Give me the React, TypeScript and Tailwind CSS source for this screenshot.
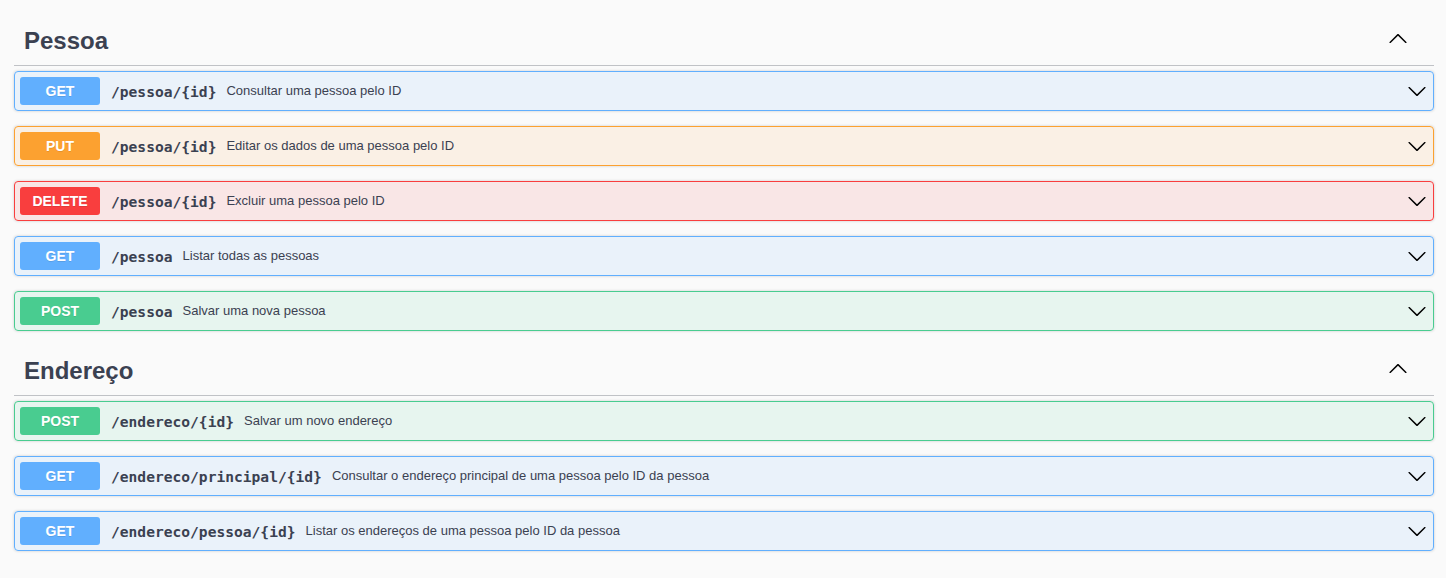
import React from "react";

type Method = "GET" | "PUT" | "DELETE" | "POST";

type Operation = {
  method: Method;
  path: string;
  summary: string;
};

const styles: Record<Method, { block: string; badge: string }> = {
  GET: {
    block: "border-[#61affe] bg-[rgba(97,175,254,0.1)]",
    badge: "bg-[#61affe]",
  },
  PUT: {
    block: "border-[#fca130] bg-[rgba(252,161,48,0.1)]",
    badge: "bg-[#fca130]",
  },
  DELETE: {
    block: "border-[#f93e3e] bg-[rgba(249,62,62,0.1)]",
    badge: "bg-[#f93e3e]",
  },
  POST: {
    block: "border-[#49cc90] bg-[rgba(73,204,144,0.1)]",
    badge: "bg-[#49cc90]",
  },
};

const sections: { name: string; ops: Operation[] }[] = [
  {
    name: "Pessoa",
    ops: [
      { method: "GET", path: "/pessoa/{id}", summary: "Consultar uma pessoa pelo ID" },
      { method: "PUT", path: "/pessoa/{id}", summary: "Editar os dados de uma pessoa pelo ID" },
      { method: "DELETE", path: "/pessoa/{id}", summary: "Excluir uma pessoa pelo ID" },
      { method: "GET", path: "/pessoa", summary: "Listar todas as pessoas" },
      { method: "POST", path: "/pessoa", summary: "Salvar uma nova pessoa" },
    ],
  },
  {
    name: "Endereço",
    ops: [
      { method: "POST", path: "/endereco/{id}", summary: "Salvar um novo endereço" },
      {
        method: "GET",
        path: "/endereco/principal/{id}",
        summary: "Consultar o endereço principal de uma pessoa pelo ID da pessoa",
      },
      {
        method: "GET",
        path: "/endereco/pessoa/{id}",
        summary: "Listar os endereços de uma pessoa pelo ID da pessoa",
      },
    ],
  },
];

function ArrowDown() {
  return (
    <svg width="20" height="20" viewBox="0 0 20 20" className="mr-[1px] shrink-0" aria-hidden="true">
      <path
        fill="#000"
        d="M17.418 6.109c.272-.268.709-.268.979 0s.271.701 0 .969l-7.908 7.83c-.27.268-.707.268-.979 0l-7.908-7.83c-.27-.268-.27-.701 0-.969.271-.268.709-.268.979 0L10 13.25l7.418-7.141z"
      />
    </svg>
  );
}

function ArrowUp() {
  return (
    <svg width="20" height="20" viewBox="0 0 20 20" className="mr-[6px] mb-[5px] shrink-0" aria-hidden="true">
      <path
        fill="#000"
        d="M17.418 14.908c.272.268.709.268.979 0s.271-.701 0-.969l-7.908-7.83c-.27-.268-.707-.268-.979 0l-7.908 7.83c-.27.268-.27.701 0 .969.271.268.709.268.979 0L10 7.767l7.418 7.141z"
      />
    </svg>
  );
}

function OperationRow({ op }: { op: Operation }) {
  const s = styles[op.method];
  return (
    <div
      className={`mb-[15px] flex items-center rounded-[4px] border p-[5px] shadow-[0_0_3px_rgba(0,0,0,0.19)] ${s.block}`}
    >
      <span
        className={`flex h-[28px] w-[80px] shrink-0 items-center justify-center rounded-[3px] text-[14px] font-bold text-white [text-shadow:0_1px_0_rgba(0,0,0,0.1)] ${s.badge}`}
        style={{ fontFamily: '"Liberation Sans", Arial, sans-serif' }}
      >
        {op.method}
      </span>
      <span
        className="pl-[11px] pr-[10px] pt-[2px] text-[14.6px] font-bold text-[#3b4151]"
        style={{ fontFamily: '"DejaVu Sans Mono", "Liberation Mono", monospace' }}
      >
        {op.path}
      </span>
      <span
        className="flex-1 text-[13px] text-[#3b4151]"
        style={{ fontFamily: '"Liberation Sans", Arial, sans-serif' }}
      >
        {op.summary}
      </span>
      <ArrowDown />
    </div>
  );
}

export default function App() {
  return (
    <div className="min-h-screen bg-[#fafafa] pl-[14px] pr-[12px] pt-[16px]">
      {sections.map((section) => (
        <div key={section.name}>
          <div className="mb-[5px] flex h-[50px] items-center border-b border-[rgba(59,65,81,0.3)] py-[10px] pl-[10px] pr-[20px]">
            <h3
              className="flex-1 text-[24px] font-bold text-[#3b4151]"
              style={{ fontFamily: '"Liberation Sans", Arial, sans-serif' }}
            >
              {section.name}
            </h3>
            <ArrowUp />
          </div>
          {section.ops.map((op, i) => (
            <OperationRow key={i} op={op} />
          ))}
        </div>
      ))}
    </div>
  );
}
